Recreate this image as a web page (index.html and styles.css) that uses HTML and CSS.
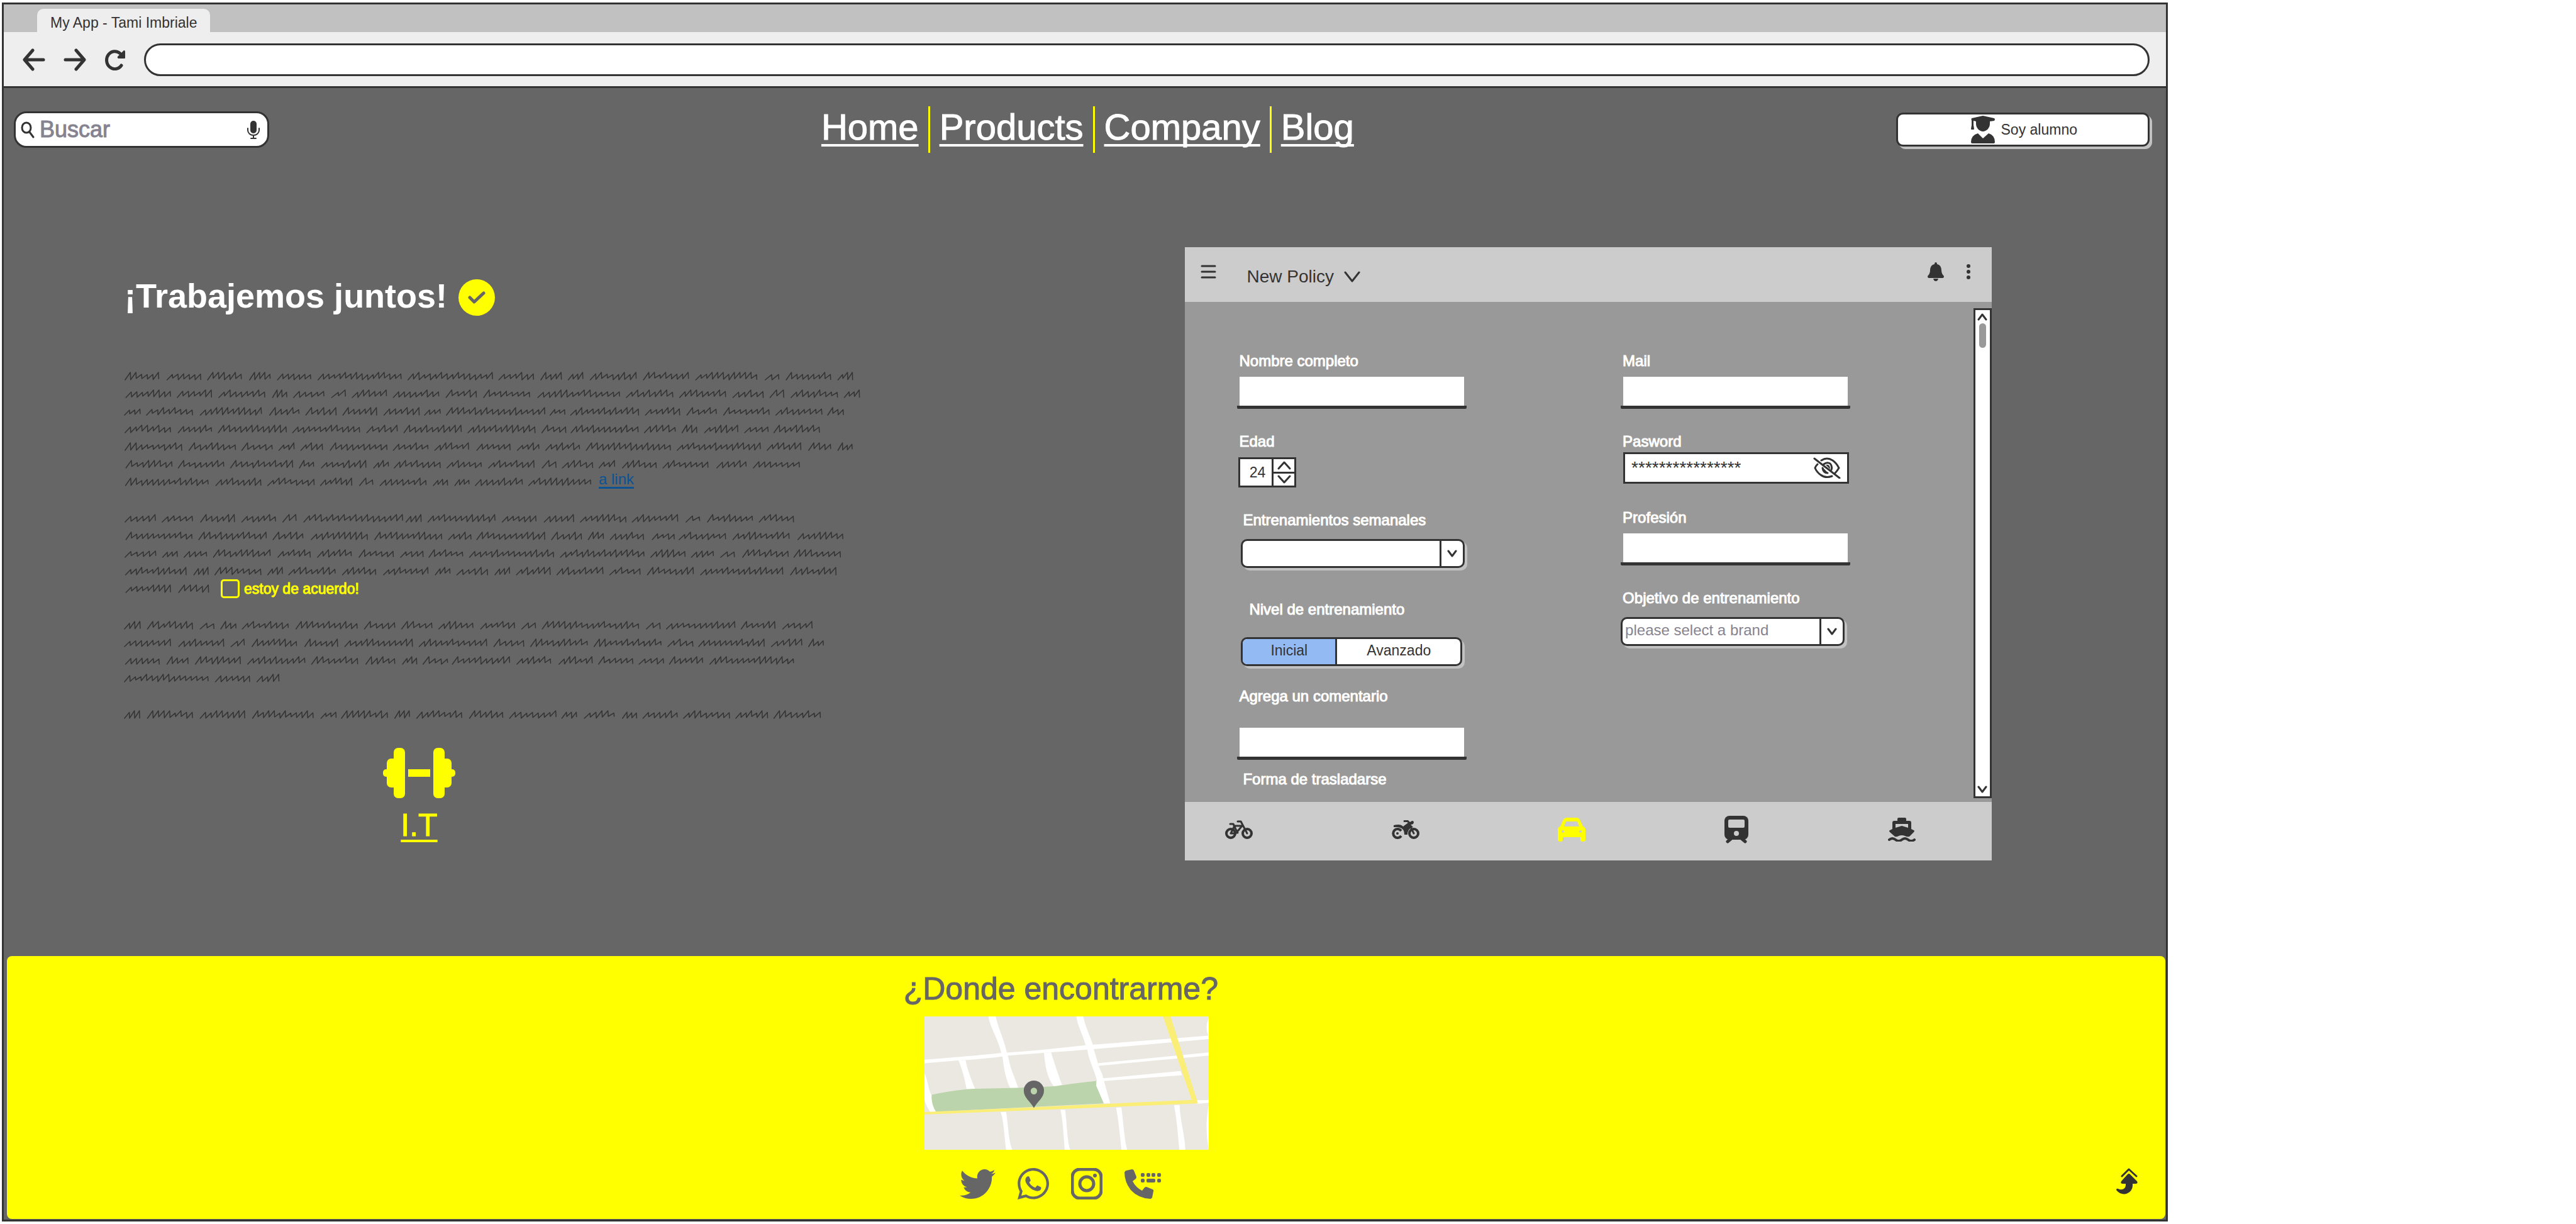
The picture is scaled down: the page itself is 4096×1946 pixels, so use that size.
FILE: index.html
```html
<!DOCTYPE html>
<html lang="es">
<head>
<meta charset="utf-8">
<meta name="viewport" content="width=device-width, initial-scale=1">
<title>My App - Tami Imbriale</title>
<link rel="stylesheet" href="styles.css">
</head>
<body>
<div class="browser">
  <div class="titlebar"><div class="tab">My App - Tami Imbriale</div></div>
  <div class="toolbar">
    <button class="icon-button" type="button" aria-label="Atrás">
      <svg width="36" height="36" viewBox="0 0 36 36" class="line-icon line-icon--bold"><path d="M33 18H4M16 3L3 18L16 33"/></svg>
    </button>
    <button class="icon-button" type="button" aria-label="Adelante">
      <svg width="36" height="36" viewBox="0 0 36 36" class="line-icon line-icon--bold"><path d="M3 18H32M20 3L33 18L20 33"/></svg>
    </button>
    <button class="icon-button" type="button" aria-label="Recargar">
      <svg width="34" height="34" viewBox="0 0 34 34"><path d="M27 26A13 14 0 1 1 25 7" fill="none" stroke="currentColor" stroke-width="5" stroke-linecap="round"/><path d="M31 2Q33 2 33 4V14Q33 15 32 15H22Q20 14 21 12Z" fill="currentColor"/></svg>
    </button>
    <input class="address" type="text" aria-label="Dirección">
  </div>

  <header class="site-header">
    <label class="search">
      <svg width="22" height="28" viewBox="0 0 22 28" class="line-icon"><ellipse cx="9" cy="11" rx="7" ry="8"/><path d="M14 18L20 26"/></svg>
      <input type="search" placeholder="Buscar" aria-label="Buscar">
      <svg width="20" height="30" viewBox="0 0 20 30"><rect x="5" y="1" width="10" height="20" rx="5" fill="currentColor"/><path d="M1 13V16A9 8 0 0 0 19 16V13M10 24V28M6 29H14" fill="none" stroke="currentColor" stroke-width="2" stroke-linecap="round"/></svg>
    </label>
    <nav class="menu">
      <a href="#home">Home</a>
      <a href="#products">Products</a>
      <a href="#company">Company</a>
      <a href="#blog">Blog</a>
    </nav>
    <button class="student" type="button">
      <svg width="38" height="44" viewBox="0 0 38 44" fill="currentColor"><path d="M19 0L37 4Q38 5 38 6L37 8L30 9V13C30 20 24 25 19 25S8 20 8 13V9L4 8V15L5 21Q5 22 4 22H1Q0 22 0 21L1 15V8Q0 5 1 4Z"/><path d="M11 28L19 36L28 28Q38 31 38 42Q38 44 36 44H2Q0 44 0 42Q0 31 11 28Z"/></svg>
      Soy alumno
    </button>
  </header>

  <main class="content">
    <section class="intro">
      <h1>
        <span>¡Trabajemos juntos!</span>
        <svg width="58" height="58" viewBox="0 0 58 58"><circle cx="29" cy="29" r="29" fill="#ff0"/><path d="M18 29L25 36L40 22" fill="none" stroke="#666" stroke-width="5" stroke-linecap="round" stroke-linejoin="round"/></svg>
      </h1>
      <div class="notes">
        <div class="paragraph">
          <div class="line"><svg data-words="28-97 114-183 197-266 283-325 340-408 423-593 607-780 793-864 879-921 935-965 980-1074 1089-1181 1196-1321 1338-1366 1381-1472 1487-1517"></svg></div>
          <div class="line"><svg data-words="30-121 135-205 220-314 330-359 373-435 451-479 493-563 577-670 685-747 762-856 873-1040 1054-1149 1163-1257 1272-1334 1348-1376 1391-1486 1500-1531"></svg></div>
          <div class="line"><svg data-words="27-59 72-166 182-307 324-384 398-460 474-543 558-630 641-673 686-887 898-928 940-1079 1093-1163 1178-1238 1253-1346 1360-1454 1466-1498"></svg></div>
          <div class="line"><svg data-words="28-121 137-205 219-358 371-508 523-585 599-716 730-867 881-930 941-1078 1091-1154 1168-1198 1214-1282 1296-1344 1356-1449"></svg></div>
          <div class="line"><svg data-words="28-144 159-254 267-329 343-374 388-432 448-564 577-648 662-731 748-816 831-875 889-958 972-1144 1158-1328 1342-1411 1427-1472 1487-1516"></svg></div>
          <div class="line"><svg data-words="30-124 137-230 244-371 385-414 430-521 537-567 579-673 687-757 772-865 882-910 923-985 998-1030 1046-1115 1129-1221 1239-1299 1314-1408"></svg></div>
          <div class="line"><svg data-words="29-198 214-306 320-415 428-492 508-535 550-644 659-688 703-732 745-841 854-981"></svg><a class="note-link" href="#link">a link</a></div>
        </div>
        <div class="paragraph">
          <div class="line"><svg data-words="28-90 104-166 183-252 267-336 351-378 394-596 603-634 648-785 800-869 886-946 960-1053 1066-1159 1176-1204 1220-1312 1326-1396"></svg></div>
          <div class="line"><svg data-words="30-165 179-317 331-392 409-524 539-676 690-736 748-887 901-962 976-1007 1021-1089 1107-1152 1162-1257 1272-1387 1405-1497"></svg></div>
          <div class="line"><svg data-words="28-91 105-135 149-195 209-325 341-407 422-491 507-577 592-638 650-719 733-905 919-1090 1104-1174 1187-1232 1247-1275 1292-1385 1397-1492"></svg></div>
          <div class="line"><svg data-words="29-153 169-198 212-306 320-350 363-458 473-541 557-648 663-693 707-770 785-815 829-898 912-1006 1020-1082 1097-1191 1206-1374 1390-1483"></svg></div>
          <div class="line"><svg data-words="30-121 138-199"></svg><label class="agree"><input type="checkbox">estoy de acuerdo!</label></div>
        </div>
        <div class="paragraph">
          <div class="line"><svg data-words="27-59 74-166 182-210 224-255 268-362 378-503 518-580 594-656 670-740 756-825 840-868 882-1079 1095-1123 1136-1276 1289-1358 1374-1434"></svg></div>
          <div class="line"><svg data-words="27-121 138-230 245-272 288-379 396-463 478-616 630-768 783-844 858-974 988-1125 1139-1190 1202-1336 1351-1413 1427-1457"></svg></div>
          <div class="line"><svg data-words="29-98 114-157 172-264 279-396 410-504 521-580 596-625 638-688 698-815 830-899 916-984 997-1067 1080-1130 1142-1210 1225-1396"></svg></div>
          <div class="line"><svg data-words="27-198 213-283 298-343"></svg></div>
        </div>
        <div class="paragraph">
          <div class="line"><svg data-words="27-58 74-166 182-273 289-413 429-460 471-565 580-610 625-717 733-801 815-910 922-952 968-1029 1046-1075 1088-1158 1171-1265 1278-1343 1356-1451"></svg></div>
        </div>
      </div>
      <div class="brand">
        <svg width="115" height="80" viewBox="0 0 115 80" fill="currentColor"><rect x="17" y="0" width="18" height="80" rx="7"/><rect x="6" y="17" width="20" height="46" rx="7"/><rect x="0" y="34" width="14" height="12" rx="5"/><rect x="80" y="0" width="18" height="80" rx="7"/><rect x="89" y="17" width="20" height="46" rx="7"/><rect x="101" y="34" width="14" height="12" rx="5"/><rect x="40" y="34" width="35" height="12"/></svg>
        <a href="#it">I.T</a>
      </div>
    </section>

    <section class="panel">
      <div class="panel-head">
        <button class="icon-button raised" type="button" aria-label="Menú">
          <svg width="25" height="22" viewBox="0 0 25 22" class="line-icon"><path d="M2 2H23M2 11H23M2 20H23"/></svg>
        </button>
        <button class="policy" type="button">New Policy
          <svg width="26" height="18" viewBox="0 0 26 18" class="line-icon"><path d="M2 2L13 16L24 2"/></svg>
        </button>
        <div class="panel-tools raised">
          <button class="icon-button" type="button" aria-label="Avisos">
            <svg width="26" height="30" viewBox="0 0 26 30" fill="currentColor"><path d="M13 0Q15 0 15 3C20 4 22 8 22 13Q22 18 26 22Q26 25 24 25H2Q0 25 0 22Q4 18 4 13C4 8 6 4 11 3Q11 0 13 0ZM9 26H17Q16 30 13 30T9 26Z"/></svg>
          </button>
          <button class="icon-button" type="button" aria-label="Más">
            <svg width="6" height="26" viewBox="0 0 6 26" fill="currentColor"><circle cx="3" cy="4" r="3"/><circle cx="3" cy="13" r="3"/><circle cx="3" cy="22" r="3"/></svg>
          </button>
        </div>
      </div>

      <div class="panel-body">
        <form class="form">
          <div class="column">
            <div class="field">
              <label for="name">Nombre completo</label>
              <div class="underlined"><input id="name" type="text"></div>
            </div>
            <div class="field">
              <label for="age">Edad</label>
              <div class="spinner">
                <input id="age" type="text" inputmode="numeric" value="24">
                <div class="steps">
                  <button type="button" aria-label="Más años"><svg width="24" height="14" viewBox="0 0 24 14" class="line-icon"><path d="M3 12L12 2L21 12"/></svg></button>
                  <button type="button" aria-label="Menos años"><svg width="24" height="14" viewBox="0 0 24 14" class="line-icon"><path d="M3 2L12 12L21 2"/></svg></button>
                </div>
              </div>
            </div>
            <div class="field field--inset field--sessions">
              <label for="sessions">Entrenamientos semanales</label>
              <div class="select"><select id="sessions"><option></option></select><span class="arrow"><svg width="16" height="12" viewBox="0 0 16 12" class="line-icon"><path d="M2 2L8 10L14 2"/></svg></span></div>
            </div>
            <fieldset class="field field--inset field--level">
              <legend>Nivel de entrenamiento</legend>
              <div class="toggle">
                <label><input type="radio" name="level" checked><span>Inicial</span></label>
                <label><input type="radio" name="level"><span>Avanzado</span></label>
              </div>
            </fieldset>
            <div class="field field--comment">
              <label for="comment">Agrega un comentario</label>
              <div class="underlined"><input id="comment" type="text"></div>
            </div>
            <div class="field field--inset field--transport"><span class="caption" id="transport">Forma de trasladarse</span></div>
          </div>
          <div class="column">
            <div class="field">
              <label for="mail">Mail</label>
              <div class="underlined"><input id="mail" type="email"></div>
            </div>
            <div class="field field--password">
              <label for="password">Pasword</label>
              <div class="password">
                <input id="password" type="text" value="****************">
                <button class="icon-button" type="button" aria-label="Mostrar">
                  <svg width="44" height="34" viewBox="0 0 44 34" class="line-icon"><path d="M13 5Q22 -1 31 5Q37 9 41 17Q38 22 35 25M30 30Q20 34 12 28Q6 24 3 17Q4 14 7 11M17 11Q22 7 27 10Q31 14 29 20M15 17Q16 25 23 25"/><path d="M20 12Q27 10 27 19ZM16 17L23 24Q17 25 16 17Z" fill="currentColor" stroke="none"/><path d="M2 2L42 33"/></svg>
                </button>
              </div>
            </div>
            <div class="field">
              <label for="job">Profesión</label>
              <div class="underlined"><input id="job" type="text"></div>
            </div>
            <div class="field field--goal">
              <label for="goal">Objetivo de entrenamiento</label>
              <div class="select"><select id="goal"><option>please select a brand</option></select><span class="arrow"><svg width="16" height="12" viewBox="0 0 16 12" class="line-icon"><path d="M2 2L8 10L14 2"/></svg></span></div>
            </div>
          </div>
        </form>
        <div class="scrollbar" aria-hidden="true">
          <svg width="16" height="12" viewBox="0 0 16 12" class="line-icon"><path d="M2 10L8 2L14 10"/></svg>
          <div class="thumb"></div>
          <svg width="16" height="12" viewBox="0 0 16 12" class="line-icon"><path d="M2 2L8 10L14 2"/></svg>
        </div>
      </div>

      <div class="transport" role="group" aria-labelledby="transport">
        <button class="icon-button" type="button" aria-label="Bicicleta">
          <svg width="44" height="30" viewBox="0 0 44 30" class="line-icon"><g stroke-width="4"><circle cx="9" cy="21" r="7"/><circle cx="35" cy="21" r="7"/></g><path d="M9 21L15 9H27L17 21H9M14 9L20 20M20 2H25L35 21M8 6H13L16 12"/></svg>
        </button>
        <button class="icon-button" type="button" aria-label="Moto">
          <svg width="44" height="30" viewBox="0 0 44 30"><g fill="none" stroke="currentColor" stroke-width="4"><path d="M15 17A7 7 0 1 0 15 25"/><circle cx="35" cy="21" r="7"/></g><path d="M35 21L31 13" stroke="currentColor" stroke-width="3" stroke-linecap="round"/><circle cx="9" cy="21" r="2" fill="currentColor"/><path d="M3 8Q14 5 18 10L26 4L24 3H19Q18 0 20 0H26L29 3Q34 -1 35 3Q35 7 30 7L34 11Q25 13 25 23H20C20 15 17 12 9 11H3Z" fill="currentColor"/></svg>
        </button>
        <button class="icon-button selected" type="button" aria-label="Auto">
          <svg width="44" height="38" viewBox="0 0 44 38" fill="currentColor" fill-rule="evenodd"><path d="M0 19Q0 15 4 14L8 5Q10 0 15 0H29Q34 0 36 5L40 14Q44 15 44 19V35Q44 38 40 38T36 35V31H8V35Q8 38 4 38T0 35ZM10 14H34L31 6H13ZM6 22A2 2 0 0 0 10 22A2 2 0 0 0 6 22ZM34 22A2 2 0 0 0 38 22A2 2 0 0 0 34 22Z"/></svg>
        </button>
        <button class="icon-button" type="button" aria-label="Tren">
          <svg width="40" height="44" viewBox="0 0 40 44"><rect x="1" y="0" width="38" height="38" rx="8" fill="currentColor"/><rect x="7" y="6" width="26" height="13" rx="2" fill="#ccc"/><circle cx="20" cy="28" r="4" fill="#ccc"/><path d="M12 36L6 41M28 36L34 41" stroke="currentColor" stroke-width="5" stroke-linecap="round"/></svg>
        </button>
        <button class="icon-button" type="button" aria-label="Barco">
          <svg width="44" height="38" viewBox="0 0 44 38" fill="currentColor"><path d="M15 5V2Q15 0 17 0H27Q29 0 29 2V5H34Q37 5 37 8V18L41 20Q43 21 41 23L34 30Q30 31 27 29Q22 27 17 29Q14 31 11 30L3 23Q1 21 3 20L7 18V8Q7 5 10 5ZM12 10V16L22 13L32 16V10Z" fill-rule="evenodd"/><path d="M2 35Q7 31 12 35T22 35T32 35T42 35" fill="none" stroke="currentColor" stroke-width="4" stroke-linecap="round"/></svg>
        </button>
      </div>
    </section>
  </main>

  <footer class="site-footer">
    <div class="find">
      <h2>¿Donde encontrarme?</h2>
      <svg class="map" viewBox="195 372 1237 708" preserveAspectRatio="none" role="img" aria-label="Mapa">
        <path fill="#ebe8e1" d="M195 372H1432V1080H195Z"/>
        <g fill="#fff">
          <path d="M473 372H505C512 420 540 490 553 562L560 590C568 650 590 700 603 752H568C550 710 540 650 535 590L529 566C515 490 480 430 473 372Z"/>
          <path d="M195 602C300 592 450 577 529 566C650 558 780 540 897 525L1432 474V492L930 546C850 553 800 560 745 562L560 580C480 595 400 602 340 606L195 621Z"/>
          <path d="M856 372H886C895 430 918 480 928 525L932 548C940 580 948 610 953 635C958 655 970 675 973 700L1003 834H975L942 740L945 710C935 660 908 600 903 545L895 522C885 470 860 420 856 372Z"/>
          <path d="M343 606L374 604C380 650 400 710 415 757H378C370 700 355 640 343 606Z"/>
          <path d="M715 565L746 562C760 620 780 690 794 737L757 742C730 700 720 640 715 565Z"/>
          <path d="M951 620L1432 563V580L953 634ZM970 701L1310 662L1316 684L975 715ZM1380 817L1432 815V830L1380 836Z"/>
          <path d="M195 675C210 710 212 760 225 790C225 820 235 850 245 880H220C205 850 197 830 195 810Z"/>
          <path d="M526 880L550 879C560 950 560 1030 577 1080H550C542 1010 540 920 526 880ZM787 868H807C815 940 815 1030 829 1080H805C800 1010 798 930 787 868Z"/>
          <path d="M1029 856L1052 855C1060 930 1065 1030 1077 1080H1052C1045 1000 1040 930 1029 856ZM1281 843L1305 842C1308 930 1328 1000 1330 1080H1304C1298 1000 1293 920 1281 843Z"/>
          <path d="M1432 380Q1413 430 1432 480ZM1432 840Q1413 960 1432 1080Z"/>
        </g>
        <path fill="#bbd4ab" d="M227 788C290 770 370 758 415 756L603 751C660 748 740 745 770 742C820 730 890 722 942 714V740L975 834L245 878C230 850 224 820 227 788Z"/>
        <path fill="#faee76" d="M195 880L1358 815L1233 372H1266L1385 834L195 893Z"/>
        <path fill="#666" fill-rule="evenodd" d="M671 858C655 820 627 805 627 765A44 52 0 1 1 715 765C715 805 687 820 671 858ZM657 768A14 18 0 0 0 685 768A14 18 0 0 0 657 768Z"/>
      </svg>
      <div class="social">
        <a href="#twitter" aria-label="Twitter"><svg width="57" height="47" viewBox="0 48 512 416" preserveAspectRatio="none" fill="currentColor"><path d="M459.37 151.716c.325 4.548.325 9.097.325 13.645 0 138.72-105.583 298.558-298.558 298.558-59.452 0-114.68-17.219-161.137-47.106 8.447.974 16.568 1.299 25.34 1.299 49.055 0 94.213-16.568 130.274-44.832-46.132-.975-84.792-31.188-98.112-72.772 6.498.974 12.995 1.624 19.818 1.624 9.421 0 18.843-1.3 27.614-3.573-48.081-9.747-84.143-51.98-84.143-102.985v-1.299c13.969 7.797 30.214 12.67 47.431 13.319-28.264-18.843-46.781-51.005-46.781-87.391 0-19.492 5.197-37.36 14.294-52.954 51.655 63.675 129.3 105.258 216.365 109.807-1.624-7.797-2.599-15.918-2.599-24.04 0-57.828 46.782-104.934 104.934-104.934 30.213 0 57.502 12.67 76.67 33.137 23.715-4.548 46.456-13.32 66.599-25.34-7.798 24.366-24.366 44.833-46.132 57.827 21.117-2.273 41.584-8.122 60.426-16.243-14.292 20.791-32.161 39.308-52.628 54.253z"/></svg></a>
        <a href="#whatsapp" aria-label="WhatsApp"><svg width="50" height="50" viewBox="0 32 448 448" fill="currentColor"><path d="M380.9 97.1C339 55.1 283.2 32 223.9 32c-122.4 0-222 99.6-222 222 0 39.1 10.2 77.3 29.6 111L0 480l117.7-30.9c32.4 17.7 68.9 27 106.1 27h.1c122.3 0 224.1-99.6 224.1-222 0-59.3-25.2-115-67.1-157zm-157 341.6c-33.2 0-65.7-8.9-94-25.7l-6.7-4-69.8 18.3L72 359.2l-4.4-7c-18.5-29.4-28.2-63.3-28.2-98.2 0-101.7 82.8-184.5 184.6-184.5 49.3 0 95.6 19.2 130.4 54.1 34.8 34.9 56.2 81.2 56.1 130.5 0 101.8-84.9 184.6-186.6 184.6zm101.2-138.2c-5.5-2.8-32.8-16.2-37.9-18-5.1-1.9-8.8-2.8-12.5 2.8-3.7 5.6-14.3 18-17.6 21.8-3.2 3.7-6.5 4.2-12 1.4-32.6-16.3-54-29.1-75.5-66-5.7-9.8 5.7-9.1 16.3-30.3 1.8-3.7.9-6.9-.5-9.7-1.4-2.8-12.5-30.1-17.1-41.2-4.5-10.8-9.1-9.3-12.5-9.5-3.2-.2-6.9-.2-10.6-.2-3.7 0-9.7 1.4-14.8 6.9-5.1 5.6-19.4 19-19.4 46.3 0 27.3 19.9 53.7 22.6 57.4 2.8 3.7 39.1 59.7 94.8 83.8 35.2 15.2 49 16.5 66.6 13.9 10.7-1.6 32.8-13.4 37.4-26.4 4.6-13 4.6-24.1 3.2-26.4-1.3-2.5-5-3.9-10.5-6.6z"/></svg></a>
        <a href="#instagram" aria-label="Instagram"><svg width="50" height="50" viewBox="0 0 50 50"><rect x="2" y="2" width="46" height="46" rx="12" fill="none" stroke="currentColor" stroke-width="5"/><circle cx="25" cy="25" r="11" fill="none" stroke="currentColor" stroke-width="5"/><circle cx="38" cy="12" r="3" fill="currentColor"/></svg></a>
        <a href="#phone" aria-label="Teléfono"><svg width="58" height="47" viewBox="0 0 58 47" fill="currentColor"><path d="M3 2L12 0Q14 0 15 2L19 12Q19 14 18 15L13 19Q18 29 28 34L32 29Q33 28 35 28L45 32Q47 33 46 35L44 45Q43 47 41 47Q22 46 10 33Q0 20 0 5Q1 2 3 2Z"/><rect x="26" y="6" width="6" height="6" rx="2"/><rect x="35" y="6" width="6" height="6" rx="2"/><rect x="43" y="6" width="6" height="6" rx="2"/><rect x="52" y="6" width="6" height="6" rx="2"/><rect x="26" y="15" width="6" height="6" rx="2"/><rect x="35" y="15" width="14" height="6" rx="2"/><rect x="52" y="15" width="6" height="6" rx="2"/></svg></a>
      </div>
    </div>
    <a class="to-top" href="#top" aria-label="Volver arriba"><svg width="34" height="42" viewBox="0 0 34 42"><path d="M9 13L20 2L32 13" fill="none" stroke="currentColor" stroke-width="3" stroke-linecap="round" stroke-linejoin="round"/><path d="M18 10Q20 8 22 10L33 21Q35 25 31 25H26V28C26 39 11 48 0 35Q0 32 3 33C9 36 15 33 15 27V25H10Q6 25 8 21Z" fill="currentColor"/></svg></a>
  </footer>
</div>
<script src="scribble.js"></script>
</body>
</html>
```
FILE: styles.css
```css
*, *::before, *::after { box-sizing: border-box; }

body {
  margin: 0;
  padding: 4px 3px;
  background: #fff;
  color: #333;
  font-family: "Liberation Sans", Arial, sans-serif;
  font-size: 23px;
}

svg { display: block; flex: none; }
input, select, button { font: inherit; color: inherit; border: 0; margin: 0; padding: 0; border-radius: 0; background: none; min-width: 0; }
input, select { outline: 0; appearance: none; }
.icon-button { display: block; flex: none; }
.line-icon { fill: none; stroke: currentColor; stroke-width: 3px; stroke-linecap: round; stroke-linejoin: round; }
.line-icon--bold { stroke-width: 5px; }

/* Browser chrome */
.browser {
  display: flex;
  flex-direction: column;
  width: 84.2%;
  min-height: calc(100vh - 8px);
  border: 3px solid #333;
  background: #666;
}
.titlebar { background: #c1c1c1; padding: 7px 53px 0; display: flex; }
.tab { background: #eee; border-radius: 10px 10px 0 0; padding: 8px 21px 0; line-height: 29px; }
.toolbar {
  display: flex;
  align-items: center;
  gap: 29px;
  padding: 18px 26px 16px 30px;
  background: #eee;
  border-bottom: 3px solid #333;
}
.address { flex: 1; height: 52px; border: 3px solid #333; border-radius: 26px; background: #fff; padding: 0 24px; }

/* Site header */
.site-header { display: flex; align-items: center; justify-content: space-between; padding: 29px 26px 0 16px; }
.search {
  display: flex;
  align-items: center;
  gap: 8px;
  width: 406px;
  height: 58px;
  padding: 0 12px 0 8px;
  border: 3px solid #333;
  border-radius: 20px;
  background: #fff;
}
.search input { flex: 1; height: 40px; font-size: 36px; line-height: 40px; -webkit-text-stroke: 1px; }
.search input::placeholder { color: #85838f; opacity: 1; }
.menu { display: flex; height: 74px; padding-left: 16px; }
.menu a {
  display: flex;
  align-items: center;
  padding: 0 15px 10px;
  color: #fff;
  font-size: 58px;
  -webkit-text-stroke: 1px;
  text-decoration: underline 4px;
  text-underline-offset: 7px;
  text-decoration-skip-ink: none;
}
.menu a + a { border-left: 3px solid #ff0; }
.student {
  display: flex;
  align-items: center;
  justify-content: center;
  gap: 10px;
  width: 403px;
  height: 54px;
  padding-left: 4px;
  border: 3px solid #333;
  border-radius: 11px;
  background: #fff;
  box-shadow: 4px 4px #c1c1c1;
}

/* Main area */
.content {
  flex: 1;
  display: grid;
  grid-template-columns: minmax(0, 1690fr) minmax(0, 1285fr);
  align-items: start;
  padding: 150px 277px 152px 192px;
}
.intro { padding-top: 51px; }
h1 { display: flex; align-items: center; gap: 18px; height: 58px; margin: 0; color: #fff; font-size: 54px; }
h1 span { padding-bottom: 6px; }
.notes { display: flex; flex-direction: column; gap: 30px; margin-top: 82px; }
.line { display: flex; align-items: center; gap: 12px; height: 28px; }
.line > svg { height: 28px; fill: none; stroke: #333; stroke-linejoin: round; stroke-linecap: round; overflow: visible; }
.note-link { color: #0b5394; font-size: 24px; text-decoration: underline 3px; text-underline-offset: 4px; padding-bottom: 8px; }
.agree { display: flex; align-items: center; gap: 7px; padding-left: 7px; color: #ff0; -webkit-text-stroke: 1px; }
.agree input { width: 30px; height: 30px; border: 3px solid #ff0; border-radius: 5px; }
.brand { display: flex; flex-direction: column; align-items: center; gap: 15px; width: 115px; margin: 39px 0 0 411px; color: #ff0; }
.brand a { color: inherit; font-size: 50px; line-height: 56px; text-decoration: underline 4px; text-underline-offset: 6px; -webkit-text-stroke: 1px; }

/* Form panel */
.panel { background: #999; }
.panel-head { display: flex; align-items: center; height: 87px; padding: 0 34px 0 25px; background: #ccc; }
.raised { padding-bottom: 10px; }
.policy { display: flex; align-items: center; gap: 16px; padding-top: 6px; margin-left: 48px; font-size: 28px; }
.panel-tools { display: flex; align-items: center; gap: 36px; margin-left: auto; }
.panel-body { display: flex; }
.form {
  flex: 1;
  min-width: 0;
  display: grid;
  grid-template-columns: repeat(2, minmax(0, 1fr));
  column-gap: 245px;
  padding: 80px 196px 22px 83px;
  color: #fff;
  font-size: 24px;
  line-height: 28px;
}
.column { display: flex; flex-direction: column; gap: 38px; }
.field { display: flex; flex-direction: column; gap: 11px; border: 0; margin: 0; padding: 0; min-width: 0; }
.field > label, .field legend, .caption { padding: 0 0 0 3px; -webkit-text-stroke: 1px; }
.field--inset { padding-left: 6px; }
.field--sessions, .field--goal { gap: 16px; }
.field--level { display: block; margin-top: 14px; }
.field--level legend { padding: 0 0 30px 13px; }
.field--comment { gap: 36px; margin-top: -4px; }
.field--transport { margin-top: -21px; }
.field--password { gap: 3px; margin-bottom: 2px; }
.underlined { padding: 0 4px; border-bottom: 5px solid #333; border-radius: 2px; }
.underlined input { display: block; width: 100%; height: 46px; padding: 0 12px; background: #fff; color: #333; }

.spinner { display: flex; width: 92px; height: 48px; margin-left: 2px; border: 3px solid #333; background: #fff; color: #333; }
.spinner input { flex: 1; text-align: center; font-size: 23px; padding-left: 4px; }
.steps { display: flex; flex-direction: column; width: 36px; border-left: 3px solid #333; }
.steps button { flex: 1; display: flex; align-items: center; justify-content: center; }
.steps button + button { border-top: 3px solid #333; }

.select { display: grid; max-width: 356px; height: 46px; border: 3px solid #333; border-radius: 10px; background: #fff; box-shadow: 4px 4px #c1c1c1; color: #333; }
.select > * { grid-area: 1 / 1; }
.select select { padding: 0 44px 4px 4px; color: #85838f; line-height: 36px; }
.arrow { display: flex; align-items: center; justify-content: center; justify-self: end; width: 37px; border-left: 3px solid #333; pointer-events: none; }

.toggle { display: flex; max-width: 352px; height: 46px; border: 3px solid #333; border-radius: 10px; background: #fff; box-shadow: 4px 4px #c1c1c1; color: #333; font-size: 23px; }
.toggle label { display: grid; flex: 148 1 0; }
.toggle label + label { flex-grow: 198; border-left: 3px solid #333; }
.toggle input, .toggle span { grid-area: 1 / 1; }
.toggle span { display: flex; align-items: center; justify-content: center; padding-bottom: 4px; }
.toggle input:checked { background: #93baf3; border-radius: 7px 0 0 7px; }

.password { display: flex; align-items: center; height: 50px; margin: 0 2px 0 4px; padding: 0 10px; border: 3px solid #333; background: #fff; color: #333; }
.password input { flex: 1; font-size: 28px; }

.scrollbar { display: flex; flex-direction: column; align-items: center; width: 29px; margin: 10px 0 6px; padding: 5px 0; border: 3px solid #333; background: #fff; }
.thumb { width: 11px; height: 39px; margin: 4px 0 auto; border-radius: 6px; background: #999; }

.transport { display: flex; align-items: center; justify-content: space-between; height: 93px; padding: 0 121px 6px 64px; background: #ccc; }
.selected { color: #ff0; }

/* Footer */
.site-footer {
  display: grid;
  grid-template-columns: 1425fr auto 1505fr;
  margin: 0 1px 1px 5px;
  padding: 22px 0 30px;
  border-radius: 8px;
  background: #ff0;
  color: #666;
}
.find { grid-column: 2; }
h2 { margin: 0 0 14px; font-size: 50px; font-weight: 400; line-height: 60px; -webkit-text-stroke: 1px; }
.map { width: 452px; height: 212px; margin-left: 33px; }
.social { display: flex; align-items: center; gap: 35px; height: 52px; margin-top: 28px; padding-left: 89px; }
.social a { color: inherit; }
.to-top { align-self: end; justify-self: end; margin: 0 44px 9px 0; color: #333; }
```
FILE: scribble.js
```js
// Draws placeholder handwriting. Each "a-b" pair in data-words is the
// start and end of one word, in units of UNIT pixels.
const UNIT = 0.777;
const ORIGIN = 27;
const PITCH = 9;

let seed = 7;
function random() {
  seed = (seed * 16807) % 2147483647;
  return seed / 2147483647;
}

for (const svg of document.querySelectorAll('svg[data-words]')) {
  let d = '';
  let end = 0;
  for (const word of svg.dataset.words.split(' ')) {
    const [from, to] = word.split('-').map((n) => (n - ORIGIN) * UNIT);
    const strokes = Math.max(2, Math.round((to - from) / PITCH));
    const step = (to - from) / strokes;
    d += `M${from.toFixed(1)} 20`;
    for (let i = 0; i < strokes; i++) {
      const x = from + i * step;
      const top = random() < 0.35 ? 8 : 10 + random() * 2;
      const bottom = 17 + random() * 3;
      // A long slanted upstroke, then a nearly vertical downstroke.
      d += `L${(x + step * 0.95).toFixed(1)} ${top.toFixed(1)}`;
      d += `L${(x + step).toFixed(1)} ${bottom.toFixed(1)}`;
    }
    end = to;
  }
  svg.setAttribute('width', Math.ceil(end));
  svg.setAttribute('aria-hidden', 'true');
  svg.innerHTML = `<path stroke-width="1.5" d="${d}"/>`;
}
```
